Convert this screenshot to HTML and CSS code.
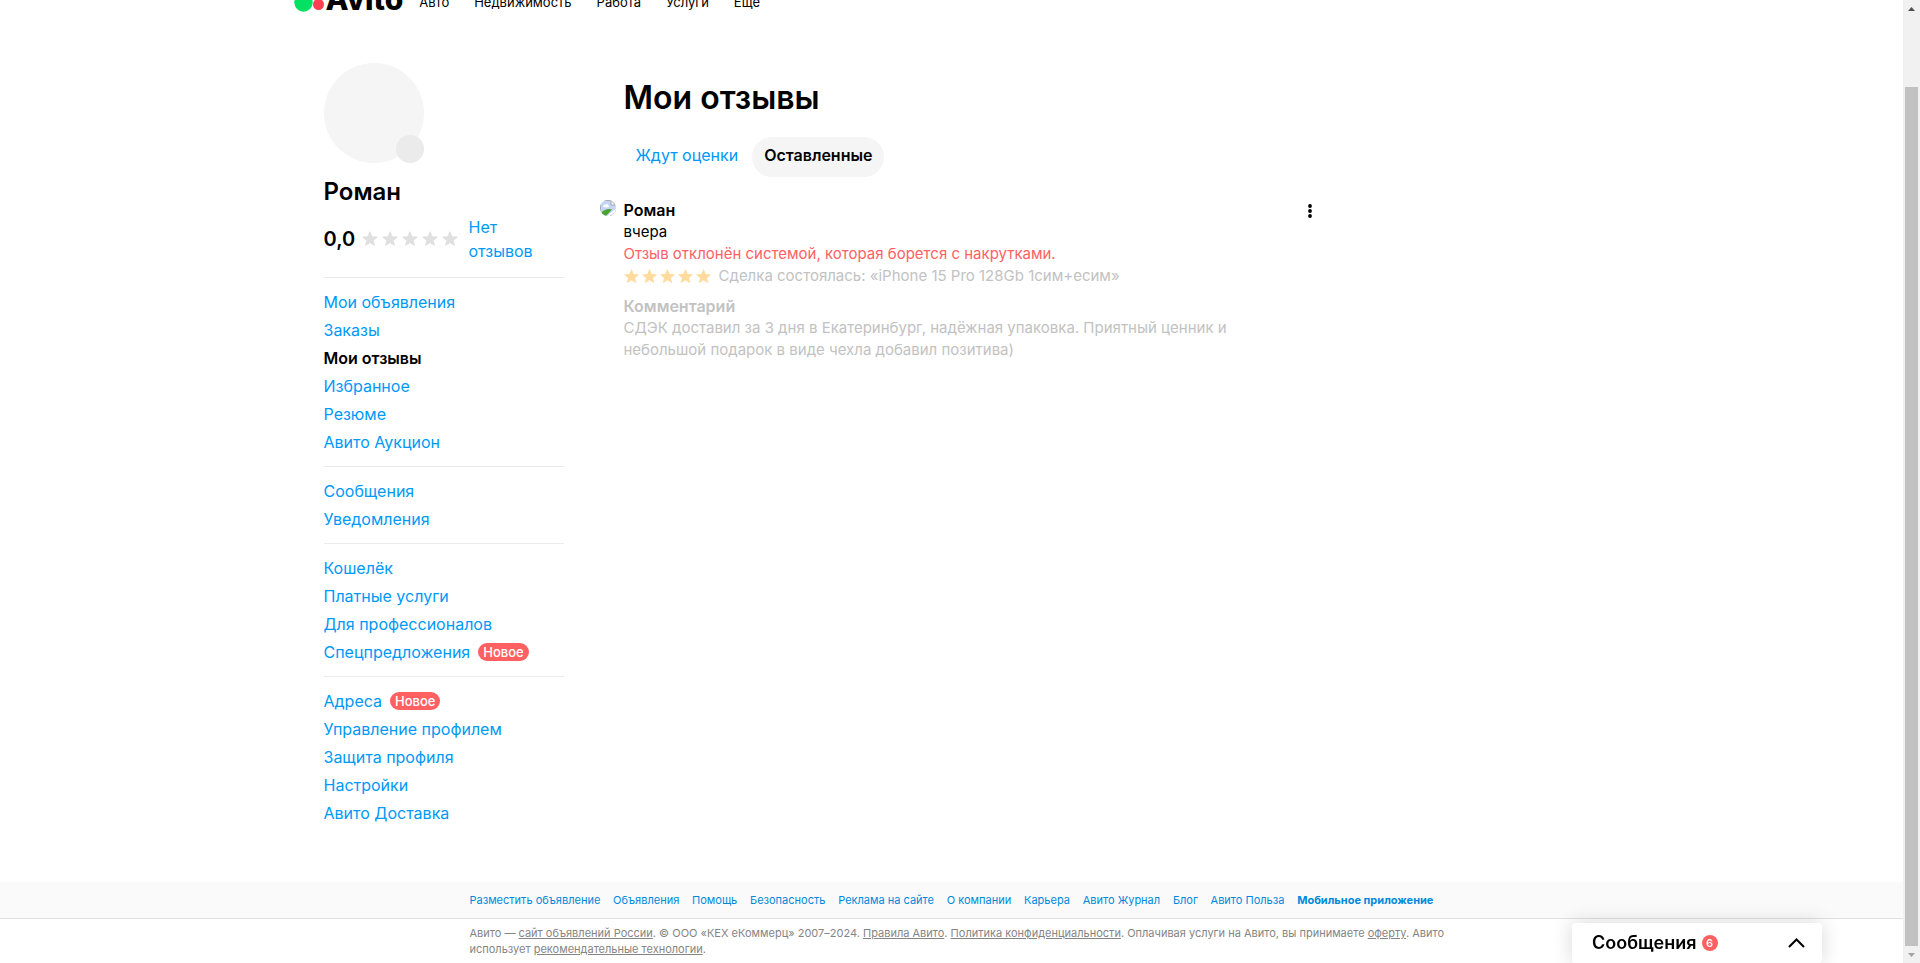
FILE: index.html
```html
<!DOCTYPE html>
<html lang="ru">
<head>
<meta charset="utf-8">
<title>Мои отзывы</title>
<link rel="stylesheet" href="styles.css">
</head>
<body>
<svg class="defs" aria-hidden="true">
  <symbol id="star" viewBox="0 0 16 16"><path d="M8 .4c.3 0 .4.2.5.4l1.800 4.500 4.800.3c.5 0 .7.5.3.8l-3.700 3.100 1.200 4.700c.1.5-.3.800-.7.500L8 12.100l-4.200 2.600c-.4.3-.8 0-.7-.5l1.200-4.700L.6 6.400c-.4-.3-.2-.8.3-.8l4.800-.3L7.500.8c.1-.2.200-.4.500-.4z"/></symbol>
</svg>
<div class="page">
  <header class="header">
    <div class="header-inner">
      <a class="logo" href="#" aria-label="Avito">
        <svg class="logo-mark" viewBox="0 0 32 32" aria-hidden="true"><circle cx="9.500" cy="20.500" r="9.200" fill="#04e061"/><circle cx="24.500" cy="22.500" r="5.500" fill="#ff4053"/><circle cx="22" cy="8" r="7" fill="#00aaff"/></svg>
        <span class="logo-text">Avito</span>
      </a>
      <nav class="topnav">
        <a href="#">Авто</a><a href="#">Недвижимость</a><a href="#">Работа</a><a href="#">Услуги</a><a href="#">Ещё</a>
      </nav>
    </div>
  </header>

  <div class="layout">
    <aside class="sidebar">
      <div class="avatar"><span class="avatar-edit"></span></div>
      <h2 class="name">Роман</h2>
      <div class="rating">
        <span class="score">0,0</span>
        <span class="stars stars-empty"><svg><use href="#star"/></svg><svg><use href="#star"/></svg><svg><use href="#star"/></svg><svg><use href="#star"/></svg><svg><use href="#star"/></svg></span>
        <a class="rating-link" href="#">Нет отзывов</a>
      </div>
      <nav class="menu">
        <ul>
          <li><a href="#">Мои объявления</a></li>
          <li><a href="#">Заказы</a></li>
          <li><a class="current" href="#">Мои отзывы</a></li>
          <li><a href="#">Избранное</a></li>
          <li><a href="#">Резюме</a></li>
          <li><a href="#">Авито Аукцион</a></li>
        </ul>
        <ul>
          <li><a href="#">Сообщения</a></li>
          <li><a href="#">Уведомления</a></li>
        </ul>
        <ul>
          <li><a href="#">Кошелёк</a></li>
          <li><a href="#">Платные услуги</a></li>
          <li><a href="#">Для профессионалов</a></li>
          <li><a href="#">Спецпредложения</a><span class="tag">Новое</span></li>
        </ul>
        <ul>
          <li><a href="#">Адреса</a><span class="tag">Новое</span></li>
          <li><a href="#">Управление профилем</a></li>
          <li><a href="#">Защита профиля</a></li>
          <li><a href="#">Настройки</a></li>
          <li><a href="#">Авито Доставка</a></li>
        </ul>
      </nav>
    </aside>

    <main class="content">
      <h1 class="title">Мои отзывы</h1>
      <div class="tabs">
        <button class="tab" type="button">Ждут оценки</button>
        <button class="tab tab-active" type="button">Оставленные</button>
      </div>
      <article class="review">
        <svg class="review-avatar" viewBox="0 0 16 16" role="img" aria-label="Роман">
          <path d="M0 0h11l5 5v11H0z" fill="#c3d5f4"/>
          <path d="M.5 16V.5H11" fill="none" stroke="#a5a5a5"/>
          <path d="M11 .5V5h4.500z" fill="#fff" stroke="#a5a5a5"/>
          <path d="M3 6.500C3 5 4.500 4.500 5.200 5 6 3.500 8.300 4 8.300 5.600c1.200 0 1.200 1.600 0 1.600H3.500z" fill="#fff"/>
          <path d="M1 16v-3c3-3.500 7.500-5 11-3.500L6 16z" fill="#4aa32f"/>
          <path d="M7 16l9-7.500v2L10 16z" fill="#fff"/>
          <path d="M15.500 10.500v5H10" fill="none" stroke="#a5a5a5"/>
        </svg>
        <div class="review-body">
          <div class="author">Роман</div>
          <div>вчера</div>
          <div class="rejected">Отзыв отклонён системой, которая борется с накрутками.</div>
          <div class="deal">
            <span class="stars stars-full"><svg><use href="#star"/></svg><svg><use href="#star"/></svg><svg><use href="#star"/></svg><svg><use href="#star"/></svg><svg><use href="#star"/></svg></span>
            <span>Сделка состоялась: «iPhone 15 Pro 128Gb 1сим+есим»</span>
          </div>
          <div class="comment">
            <div class="comment-title">Комментарий</div>
            <div>СДЭК доставил за 3 дня в Екатеринбург, надёжная упаковка. Приятный ценник и небольшой подарок в виде чехла добавил позитива)</div>
          </div>
        </div>
        <button class="more" type="button" aria-label="Действия"><svg viewBox="0 0 4 14"><circle cx="2" cy="2" r="1.900"/><circle cx="2" cy="7" r="1.900"/><circle cx="2" cy="12" r="1.900"/></svg></button>
      </article>
    </main>
  </div>

  <footer class="footer">
    <div class="footer-bar">
      <nav class="footer-inner footer-nav">
        <a href="#">Разместить объявление</a><a href="#">Объявления</a><a href="#">Помощь</a><a href="#">Безопасность</a><a href="#">Реклама на сайте</a><a href="#">О компании</a><a href="#">Карьера</a><a href="#">Авито Журнал</a><a href="#">Блог</a><a href="#">Авито Польза</a><a class="strong" href="#">Мобильное приложение</a>
      </nav>
    </div>
    <div class="footer-inner">
      <p class="legal">Авито — <a href="#">сайт объявлений России</a>. © ООО «КЕХ еКоммерц» 2007–2024. <a href="#">Правила Авито</a>. <a href="#">Политика конфиденциальности</a>. Оплачивая услуги на Авито, вы принимаете <a href="#">оферту</a>. Авито использует <a href="#">рекомендательные технологии</a>.</p>
    </div>
  </footer>
</div>

<div class="scrollbar" aria-hidden="true">
  <svg class="arrow arrow-up" viewBox="0 0 7 4"><path d="M0 4L3.500 0 7 4z"/></svg>
  <div class="thumb"></div>
  <svg class="arrow arrow-down" viewBox="0 0 7 4"><path d="M0 0l3.500 4L7 0z"/></svg>
</div>

<button class="messenger" type="button">
  <span class="messenger-title">Сообщения</span>
  <span class="counter">6</span>
  <svg class="chevron" viewBox="0 0 17 10"><path d="M1 9l7.500-7.500L16 9" fill="none" stroke="#000" stroke-width="2"/></svg>
</button>
</body>
</html>
```
FILE: styles.css
```css
:root {
  --text: 16px;
  --text-review: 15px;
  --line: 22px;
  --blue: #0099f7;
  --red: #ff6163;
}

* { box-sizing: border-box; }

body {
  margin: 0;
  display: flex;
  height: 100vh;
  overflow: hidden;
  background: #fff;
  color: #000;
  font-family: Inter, "Noto Sans", sans-serif;
  font-size: var(--text);
  line-height: var(--line);
}

h1, h2, p, ul { margin: 0; padding: 0; }
ul { list-style: none; }
a { color: var(--blue); text-decoration: none; }
button { font: inherit; color: inherit; background: none; border: 0; padding: 0; cursor: pointer; }
.defs { display: none; }

.page { flex: 1; min-width: 0; display: flex; flex-direction: column; }

/* header, scrolled mostly out of view */
.header { height: 14px; overflow: hidden; }
.header-inner {
  max-width: 1316px;
  height: 100%;
  margin: 0 auto;
  display: flex;
  align-items: flex-end;
  gap: 16px;
}
.logo { display: flex; align-items: flex-end; color: #000; }
.logo-mark { width: 32px; height: 32px; }
.logo-text { font-size: 30px; line-height: 30px; font-weight: 800; }
.topnav { display: flex; gap: 25px; font-size: 13px; line-height: 24px; }
.topnav a { color: #000; }

.layout {
  flex: 1;
  width: 100%;
  max-width: 1316px;
  margin: 0 auto;
  padding: 49px 30px 0;
  display: flex;
  gap: 36px;
}

/* sidebar */
.sidebar { width: 240px; flex: none; }
.avatar { position: relative; width: 100px; height: 100px; border-radius: 50%; background: #f5f5f5; }
.avatar-edit { position: absolute; right: 0; bottom: 0; width: 28px; height: 28px; border-radius: 50%; background: #ebebeb; }
.name { margin-top: 14px; font-size: 24px; line-height: 30px; font-weight: 600; }
.rating { display: flex; align-items: center; margin-top: 8px; line-height: 24px; }
.score { width: 38px; font-size: 20px; font-weight: 600; }
.stars { display: flex; flex: none; }
.stars svg { width: 16px; height: 16px; }
.stars-empty { gap: 4px; fill: #e0e0e0; }
.rating-link { margin-left: 11px; width: 72px; }

.menu { margin-top: 14px; }
.menu ul { border-top: 1px solid #ebebeb; padding: 10px 0; }
.menu li { display: flex; align-items: center; gap: 8px; height: 28px; }
.menu .current { color: #000; font-weight: 600; }
.tag { padding: 0 5px; border-radius: 9px; background: var(--red); color: #fff; font-size: 13px; line-height: 18px; font-weight: 500; }

/* reviews */
.content { flex: 1; max-width: 732px; }
.title { margin: 15px 0 19px 24px; font-size: 32px; line-height: 40px; font-weight: 600; }
.tabs { display: flex; gap: 2px; margin-left: 24px; }
.tab { height: 40px; padding: 0 12px 4px; border-radius: 20px; color: var(--blue); }
.tab-active { background: #f5f5f5; color: #000; font-weight: 600; }
.review { display: flex; gap: 8px; margin-top: 22px; }
.review-avatar { width: 16px; height: 16px; margin-top: 1px; border-radius: 50%; flex: none; }
.review-body { width: 640px; font-size: var(--text-review); }
.author, .comment-title { font-size: var(--text); font-weight: 600; }
.rejected { color: var(--red); }
.deal { display: flex; align-items: center; gap: 8px; color: #c2c2c2; }
.stars-full { gap: 3px; fill: #ffdb9e; }
.stars-full svg { width: 15px; height: 15px; }
.comment { margin-top: 8px; color: #c2c2c2; }
.more { width: 44px; height: 24px; margin-left: auto; }
.more svg { width: 4px; height: 14px; display: block; margin: 0 auto; }

/* footer */
.footer { font-size: 11px; line-height: 16px; }
.footer-bar { background: #fafafa; border-bottom: 1px solid #e0e0e0; }
.footer-inner { width: 100%; max-width: 964px; margin: 0 auto; }
.footer-nav { display: flex; justify-content: space-between; white-space: nowrap; padding: 10px 0; }
.footer-nav a { color: #0089db; }
.footer-nav .strong { font-weight: 700; }
.legal { margin-right: -16px; padding: 6px 0; color: #858585; }
.legal a { color: inherit; text-decoration: underline; }

/* scrollbar */
.scrollbar { width: 17px; flex: none; background: #f1f1f1; display: flex; flex-direction: column; align-items: center; padding: 7px 0 6px; }
.thumb { flex: 1; width: 13px; margin: 76px 0 7px; background: #c1c1c1; }
.arrow { width: 7px; height: 4px; flex: none; }
.arrow-up { fill: #505050; }
.arrow-down { fill: #a3a3a3; }

/* messenger dock */
.messenger {
  position: fixed;
  right: 98px;
  bottom: 0;
  width: 250px;
  height: 40px;
  padding: 0 17px 0 20px;
  display: flex;
  align-items: center;
  gap: 5px;
  background: #fff;
  border-radius: 4px;
  box-shadow: 0 0 20px rgba(0, 0, 0, .16);
}
.messenger-title { font-size: 18px; font-weight: 600; }
.counter { width: 16px; height: 16px; border-radius: 50%; background: var(--red); color: #fff; font-size: 11px; line-height: 16px; font-weight: 600; }
.chevron { width: 17px; height: 10px; margin-left: auto; }
```
